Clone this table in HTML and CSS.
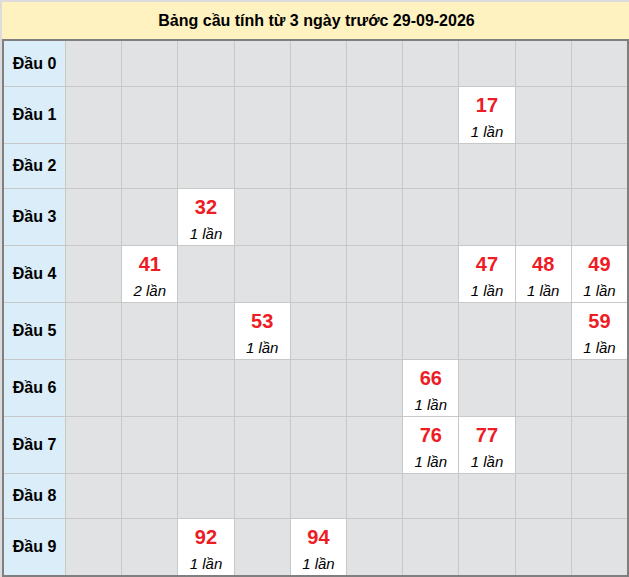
FILE: index.html
```html
<!DOCTYPE html>
<html lang="vi">
<head>
<meta charset="utf-8">
<title>Bảng cầu</title>
<link rel="stylesheet" href="styles.css">
</head>
<body>
<div class="board">
  <div class="title">Bảng cầu tính từ 3 ngày trước 29-09-2026</div>
  <div class="grid">
    <div class="label">Đầu 0</div>
    <div class="cell"></div><div class="cell"></div><div class="cell"></div><div class="cell"></div><div class="cell"></div><div class="cell"></div><div class="cell"></div><div class="cell"></div><div class="cell"></div><div class="cell"></div>

    <div class="label">Đầu 1</div>
    <div class="cell"></div><div class="cell"></div><div class="cell"></div><div class="cell"></div><div class="cell"></div><div class="cell"></div><div class="cell"></div>
    <div class="cell hit"><span class="num">17</span><span class="times">1 lần</span></div>
    <div class="cell"></div><div class="cell"></div>

    <div class="label">Đầu 2</div>
    <div class="cell"></div><div class="cell"></div><div class="cell"></div><div class="cell"></div><div class="cell"></div><div class="cell"></div><div class="cell"></div><div class="cell"></div><div class="cell"></div><div class="cell"></div>

    <div class="label">Đầu 3</div>
    <div class="cell"></div><div class="cell"></div>
    <div class="cell hit"><span class="num">32</span><span class="times">1 lần</span></div>
    <div class="cell"></div><div class="cell"></div><div class="cell"></div><div class="cell"></div><div class="cell"></div><div class="cell"></div><div class="cell"></div>

    <div class="label">Đầu 4</div>
    <div class="cell"></div>
    <div class="cell hit"><span class="num">41</span><span class="times">2 lần</span></div>
    <div class="cell"></div><div class="cell"></div><div class="cell"></div><div class="cell"></div><div class="cell"></div>
    <div class="cell hit"><span class="num">47</span><span class="times">1 lần</span></div>
    <div class="cell hit"><span class="num">48</span><span class="times">1 lần</span></div>
    <div class="cell hit"><span class="num">49</span><span class="times">1 lần</span></div>

    <div class="label">Đầu 5</div>
    <div class="cell"></div><div class="cell"></div><div class="cell"></div>
    <div class="cell hit"><span class="num">53</span><span class="times">1 lần</span></div>
    <div class="cell"></div><div class="cell"></div><div class="cell"></div><div class="cell"></div><div class="cell"></div>
    <div class="cell hit"><span class="num">59</span><span class="times">1 lần</span></div>

    <div class="label">Đầu 6</div>
    <div class="cell"></div><div class="cell"></div><div class="cell"></div><div class="cell"></div><div class="cell"></div><div class="cell"></div>
    <div class="cell hit"><span class="num">66</span><span class="times">1 lần</span></div>
    <div class="cell"></div><div class="cell"></div><div class="cell"></div>

    <div class="label">Đầu 7</div>
    <div class="cell"></div><div class="cell"></div><div class="cell"></div><div class="cell"></div><div class="cell"></div><div class="cell"></div>
    <div class="cell hit"><span class="num">76</span><span class="times">1 lần</span></div>
    <div class="cell hit"><span class="num">77</span><span class="times">1 lần</span></div>
    <div class="cell"></div><div class="cell"></div>

    <div class="label">Đầu 8</div>
    <div class="cell"></div><div class="cell"></div><div class="cell"></div><div class="cell"></div><div class="cell"></div><div class="cell"></div><div class="cell"></div><div class="cell"></div><div class="cell"></div><div class="cell"></div>

    <div class="label">Đầu 9</div>
    <div class="cell"></div><div class="cell"></div>
    <div class="cell hit"><span class="num">92</span><span class="times">1 lần</span></div>
    <div class="cell"></div>
    <div class="cell hit"><span class="num">94</span><span class="times">1 lần</span></div>
    <div class="cell"></div><div class="cell"></div><div class="cell"></div><div class="cell"></div><div class="cell"></div>
  </div>
</div>
</body>
</html>
```
FILE: styles.css
```css
html, body {
  margin: 0;
  padding: 0;
  overflow: hidden;
}
body {
  background: #dcdcdc;
  font-family: "Liberation Sans", Arial, sans-serif;
  color: #000;
}
.board {
  margin: 2px 0 0 2px;
  width: 627px;
}
.title {
  height: 37px;
  background: #fff2c1;
  font-weight: bold;
  font-size: 16px;
  line-height: 37px;
  text-align: center;
  padding-left: 2px;
}
.grid {
  display: grid;
  grid-template-columns: 61px repeat(10, 1fr);
  grid-template-rows: 45px 56px 44px 56px 56px 56px 56px 56px 44px 56px;
  gap: 1px;
  background: #c8c8c8;
  border: 2px solid #7f7f7f;
}
.label {
  background: #daedf8;
  font-weight: bold;
  font-size: 16px;
  display: flex;
  align-items: center;
  justify-content: center;
}
.cell {
  background: #e1e2e4;
}
.hit {
  background: #fff;
  display: flex;
  flex-direction: column;
  align-items: center;
  justify-content: center;
  padding-top: 4px;
}
.num {
  color: #ee1c25;
  font-weight: bold;
  font-size: 20px;
  line-height: 24px;
}
.times {
  font-style: italic;
  font-size: 15px;
  line-height: 18px;
  margin-top: 6px;
}
```
